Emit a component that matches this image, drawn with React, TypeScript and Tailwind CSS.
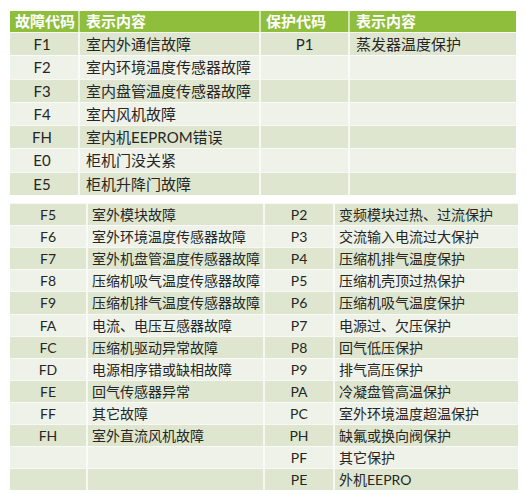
const topRows: [string, string, string, string][] = [
  ["F1", "室内外通信故障", "P1", "蒸发器温度保护"],
  ["F2", "室内环境温度传感器故障", "", ""],
  ["F3", "室内盘管温度传感器故障", "", ""],
  ["F4", "室内风机故障", "", ""],
  ["FH", "室内机EEPROM错误", "", ""],
  ["E0", "柜机门没关紧", "", ""],
  ["E5", "柜机升降门故障", "", ""],
];

const bottomRows: [string, string, string, string][] = [
  ["F5", "室外模块故障", "P2", "变频模块过热、过流保护"],
  ["F6", "室外环境温度传感器故障", "P3", "交流输入电流过大保护"],
  ["F7", "室外机盘管温度传感器故障", "P4", "压缩机排气温度保护"],
  ["F8", "压缩机吸气温度传感器故障", "P5", "压缩机壳顶过热保护"],
  ["F9", "压缩机排气温度传感器故障", "P6", "压缩机吸气温度保护"],
  ["FA", "电流、电压互感器故障", "P7", "电源过、欠压保护"],
  ["FC", "压缩机驱动异常故障", "P8", "回气低压保护"],
  ["FD", "电源相序错或缺相故障", "P9", "排气高压保护"],
  ["FE", "回气传感器异常", "PA", "冷凝盘管高温保护"],
  ["FF", "其它故障", "PC", "室外环境温度超温保护"],
  ["FH", "室外直流风机故障", "PH", "缺氟或换向阀保护"],
  ["", "", "PF", "其它保护"],
  ["", "", "PE", "外机EEPRO"],
];

function rowBg(i: number) {
  return i % 2 === 0 ? "bg-[#dfe6d0]" : "bg-[#eef2e8]";
}

export default function App() {
  return (
    <div className="w-[526px] h-[500px] bg-white pt-[11px] pl-[10px] text-[#262626] font-['Lato','Noto_Sans_CJK_SC',sans-serif]">
      {/* upper table */}
      <div className="w-[506px] flex flex-col">
        <div className="flex h-[21px] bg-[#8fbd3c] text-white font-bold text-[15px] leading-[21px]">
          <div className="w-[70px] pl-[5px] border-r-2 border-white/60">故障代码</div>
          <div className="w-[181px] pl-[6px] border-r-2 border-white/60">表示内容</div>
          <div className="w-[89px] pl-[5px] border-r-2 border-white/60">保护代码</div>
          <div className="flex-1 pl-[6px]">表示内容</div>
        </div>
        {topRows.map((r, i) => (
          <div key={i} className={`flex h-[23.3px] text-[15px] leading-[23px] border-t border-white/70 ${rowBg(i)}`}>
            <div className="w-[70px] text-center pr-[4px] border-r-2 border-white/70">{r[0]}</div>
            <div className="w-[181px] pl-[6px] border-r-2 border-white/70 whitespace-nowrap">{r[1]}</div>
            <div className="w-[89px] text-center border-r-2 border-white/70">{r[2]}</div>
            <div className="flex-1 pl-[6px] whitespace-nowrap">{r[3]}</div>
          </div>
        ))}
      </div>

      {/* lower table */}
      <div className="w-[508px] flex flex-col mt-[8px]">
        {bottomRows.map((r, i) => (
          <div key={i} className={`flex h-[22.1px] text-[14px] leading-[22px] border-t border-white/70 ${rowBg(i)}`}>
            <div className="w-[78px] text-center border-r-2 border-white/70">{r[0]}</div>
            <div className="w-[177px] pl-[4px] border-r-2 border-white/70 whitespace-nowrap">{r[1]}</div>
            <div className="w-[70px] text-center border-r-2 border-white/70">{r[2]}</div>
            <div className="flex-1 pl-[4px] whitespace-nowrap">{r[3]}</div>
          </div>
        ))}
      </div>
    </div>
  );
}
